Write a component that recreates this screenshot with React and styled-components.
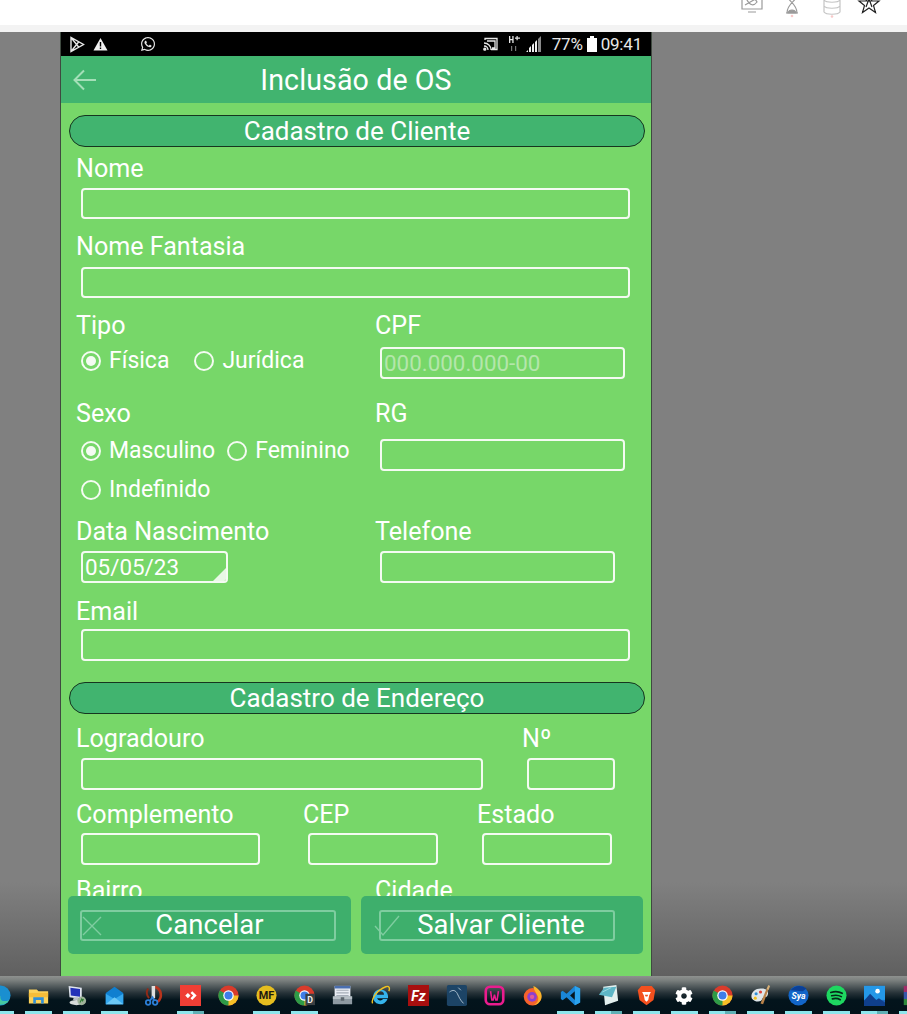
import React from "react";
import styled, { createGlobalStyle } from "styled-components";
import { FaCog, FaWhatsapp } from "react-icons/fa";

const GlobalStyle = createGlobalStyle`
  html, body {
    margin: 0;
    padding: 0;
    background: #ffffff;
  }
  * {
    box-sizing: border-box;
  }
`;

const Screen = styled.div`
  width: 907px;
  height: 1014px;
  overflow: hidden;
  display: flex;
  flex-direction: column;
  font-family: Roboto, "Liberation Sans", sans-serif;
  color: #ffffff;
`;

const BrowserBar = styled.div`
  height: 32px;
  flex: none;
  background: #ffffff;
  border-bottom: 7px solid #f3f3f3;
  display: flex;
  justify-content: flex-end;
  align-items: flex-start;
  gap: 16px;
  padding-right: 26px;
  overflow: hidden;
`;

const BrowserIcon = styled.svg`
  display: block;
  margin-top: -8px;
  margin-left: ${(props) => props.$left || 0}px;
  fill: none;
  stroke: ${(props) => props.$stroke || "#9a9a9a"};
  stroke-width: 1.2;
`;

const Desktop = styled.div`
  flex: 1;
  min-height: 0;
  background: linear-gradient(#808080 0, #808080 850px, #606060 944px);
  padding-left: 60px;
`;

const Phone = styled.div`
  position: relative;
  width: 592px;
  height: 100%;
  overflow: hidden;
  display: flex;
  flex-direction: column;
  background: #77d769;
  border-left: 1px solid #3f4a40;
  border-right: 1px solid #3f4a40;
`;

const StatusBar = styled.div`
  height: 24px;
  flex: none;
  margin: 0 -1px;
  background: #000000;
  display: flex;
  align-items: center;
  padding: 0 10px 0 9px;
  font-size: 17px;
  letter-spacing: -0.2px;
  color: #e8e8e8;
`;

const StatusLeft = styled.div`
  display: flex;
  align-items: center;
  gap: 8px;
  flex: 1;
`;

const WhatsappIcon = styled(FaWhatsapp)`
  width: 16px;
  height: 16px;
  margin-left: 24px;
`;

const StatusRight = styled.div`
  display: flex;
  align-items: center;
`;

const StatusIcon = styled.svg`
  display: block;
  margin-left: ${(props) => props.$left || 0}px;
  margin-right: ${(props) => props.$gap || 0}px;
`;

const AppBar = styled.div`
  height: 47px;
  flex: none;
  background: #41b46f;
  display: flex;
  align-items: center;
  justify-content: center;
  position: relative;
`;

const BackIcon = styled.svg`
  position: absolute;
  left: 12px;
  top: 13px;
  fill: none;
  stroke: #a4dfb8;
  stroke-width: 2;
`;

const Title = styled.div`
  font-size: 28.6px;
  font-weight: 400;
  letter-spacing: 0.1px;
`;

const Form = styled.div`
  padding: 12px 6px 0 8px;
  display: flex;
  flex-direction: column;
`;

const SectionPill = styled.div`
  height: 32px;
  margin-top: ${(props) => props.$top || 0}px;
  background: #41b46f;
  border: 1px solid #16351f;
  border-radius: 16px;
  display: flex;
  align-items: center;
  justify-content: center;
  font-size: 26px;
  line-height: 30px;
`;

const Row = styled.div`
  display: flex;
  margin-top: ${(props) => props.$top || 0}px;
  height: ${(props) => (props.$height ? `${props.$height}px` : "auto")};
`;

const Field = styled.div`
  width: ${(props) => (props.$width ? `${props.$width}px` : "auto")};
  flex: ${(props) => (props.$width ? "none" : "1")};
  padding-left: 7px;
`;

const Label = styled.div`
  font-size: 25.1px;
  line-height: 32px;
  height: 30px;
  white-space: nowrap;
`;

const TextBox = styled.div`
  position: relative;
  width: ${(props) => props.$width}px;
  height: ${(props) => props.$height || 32}px;
  margin: ${(props) => props.$top || 5}px 0 0 5px;
  border: 2px solid #f4fbf2;
  border-radius: 4px;
  font-size: 22.4px;
  line-height: 28px;
  padding-left: 2px;
  color: ${(props) => (props.$hint ? "#b4e6ab" : "#ffffff")};
  overflow: hidden;
`;

const DateCorner = styled.span`
  position: absolute;
  right: 0;
  bottom: 0;
  width: 0;
  height: 0;
  border-style: solid;
  border-width: 0 0 13px 13px;
  border-color: transparent transparent #e9f8e6 transparent;
`;

const RadioRow = styled.div`
  display: flex;
  align-items: center;
  margin: ${(props) => props.$top || 0}px 0 0 5px;
  height: 28px;
  gap: ${(props) => props.$gap || 0}px;
`;

const RadioItem = styled.div`
  display: flex;
  align-items: center;
  gap: 8px;
  font-size: 23px;
  line-height: 28px;
  white-space: nowrap;
`;

const RadioMark = styled.span`
  width: 20px;
  height: 20px;
  flex: none;
  border: 2px solid #f4fbf2;
  border-radius: 50%;
  display: flex;
  align-items: center;
  justify-content: center;
  &::after {
    content: "";
    width: 10px;
    height: 10px;
    border-radius: 50%;
    background: ${(props) => (props.$checked ? "#f4fbf2" : "transparent")};
  }
`;

const ActionBar = styled.div`
  position: absolute;
  left: 7px;
  top: 864px;
  display: flex;
  gap: 10px;
`;

const ActionPanel = styled.div`
  width: ${(props) => props.$width}px;
  height: 58px;
  background: #3eaf6c;
  border-radius: 5px;
  display: flex;
  align-items: center;
  padding-left: ${(props) => props.$left}px;
`;

const ActionButton = styled.div`
  position: relative;
  width: ${(props) => props.$width}px;
  height: 31px;
  border: 2px solid #7fcda0;
  border-radius: 3px;
  display: flex;
  align-items: center;
  justify-content: center;
  padding-left: ${(props) => props.$inset}px;
  font-size: 27.4px;
  line-height: 30px;
  letter-spacing: 0.1px;
`;

const ActionIcon = styled.svg`
  position: absolute;
  left: ${(props) => props.$left}px;
  top: 2px;
  fill: none;
  stroke: #7fcda0;
  stroke-width: 1.4;
`;

const Taskbar = styled.div`
  position: absolute;
  left: 0;
  right: 0;
  bottom: 0;
  height: 38px;
  background: linear-gradient(#8e918f 0, #7d8280 4px, #263238 17px, #03141c 24px, #03121a 100%);
  display: flex;
  overflow: hidden;
`;

const TaskSlot = styled.div`
  position: relative;
  width: 38px;
  flex: none;
  display: flex;
  justify-content: center;
  padding-top: 9px;
  margin-left: ${(props) => props.$shift || 0}px;
  &::after {
    content: "";
    display: ${(props) => (props.$running ? "block" : "none")};
    position: absolute;
    left: 6px;
    bottom: 0;
    width: 27px;
    height: 3px;
    background: ${(props) =>
      props.$stacked
        ? "linear-gradient(90deg, #8ee6ec 0 60%, #5fb0b5 60% 100%)"
        : "#8ee6ec"};
  }
`;

const TaskIcon = styled.svg`
  display: block;
  width: 21px;
  height: 21px;
`;

const GearIcon = styled(FaCog)`
  display: block;
  width: 18px;
  height: 18px;
  margin-top: 2px;
  color: #ffffff;
`;

const chromeParts = (
  <>
    <circle cx="12" cy="12" r="11.5" fill="#d93b2b" />
    <path d="M12 12 2 6.2A11.5 11.5 0 0 0 12 23.5l5.8-10z" fill="#2e9b47" />
    <path d="M12 12h11.5A11.5 11.5 0 0 1 12 23.5z" fill="#f6c026" />
    <circle cx="12" cy="12" r="6" fill="#ffffff" />
    <circle cx="12" cy="12" r="4.6" fill="#3f7de8" />
  </>
);

const svgText = { fontFamily: "Roboto, sans-serif", fontWeight: 700 };

const taskIcons = {
  edge: (
    <>
      <circle cx="12" cy="12" r="11.5" fill="#1a8fd0" />
      <path d="M2 16c3 8 15 9 20 1-6 3-11 1-10-4C7 9 3 11 2 16z" fill="#46c8a0" />
    </>
  ),
  folder: (
    <>
      <path d="M1 5h9l2 2h11v14H1z" fill="#fbd25c" />
      <path d="M1 9h22v5H1z" fill="#f5bd3a" />
      <path d="M6 14h12v7h-3v-4H9v4H6z" fill="#2f8fd8" />
    </>
  ),
  monitor: (
    <>
      <path d="M3 1 18 3v13L4 14z" fill="#dfe4ee" />
      <path d="M5 3 16 4.5v9L5.5 12z" fill="#2331b8" />
      <path d="M9 14h5v3H8z" fill="#b8bcc4" />
      <ellipse cx="12" cy="20" rx="8" ry="3" fill="#d7dad9" />
      <circle cx="18" cy="18" r="5" fill="#9fb29a" />
      <path d="m16 20 2-4 1 2 1-2" stroke="#2e7d32" strokeWidth="1.2" fill="none" />
    </>
  ),
  mail: (
    <>
      <path d="M2 9 12 2l10 7v13H2z" fill="#0f7fd0" />
      <path d="M2 10 12 16l10-6v12H2z" fill="#35a8ee" />
      <path d="M2 22 12 14l10 8z" fill="#6cc8f5" />
    </>
  ),
  snip: (
    <>
      <path d="M15 2a10 10 0 0 1 3 17" fill="none" stroke="#b8341c" strokeWidth="3" />
      <path d="M11 1h4v13l-2 3-2-3z" fill="#e0e0e0" />
      <path d="M7 4a9 9 0 0 0 1 11" fill="none" stroke="#8e2a18" strokeWidth="2.4" />
      <circle cx="7" cy="20" r="2.6" fill="none" stroke="#2c7fd8" strokeWidth="2" />
      <circle cx="15" cy="20" r="2.6" fill="none" stroke="#2c7fd8" strokeWidth="2" />
      <path d="m9 18 3-4 2 4" fill="none" stroke="#2c7fd8" strokeWidth="2" />
    </>
  ),
  anydesk: (
    <>
      <path d="M0 0h24v24H0z" fill="#ef3e35" />
      <path d="m9 9 3 3-3 3-3-3zM14 7l5 5-5 5-2-2 3-3-3-3z" fill="#ffffff" />
    </>
  ),
  chrome: chromeParts,
  mf: (
    <>
      <circle cx="12" cy="12" r="11.5" fill="#e5bd1f" />
      <text x="12" y="16.5" fontSize="12.5" textAnchor="middle" fill="#1d1a10" style={svgText}>MF</text>
    </>
  ),
  chromeDev: (
    <>
      {chromeParts}
      <path d="M13 10h11v13H13z" fill="#3a3f42" />
      <text x="18.5" y="20.5" fontSize="10" textAnchor="middle" fill="#f2f2f2" style={svgText}>D</text>
    </>
  ),
  toolbox: (
    <>
      <path d="M3 1h18v14H3z" fill="#e9edf3" />
      <path d="M3 1h18v3H3z" fill="#4a6fb0" />
      <path d="M5 6h14M5 9h14M5 12h14" stroke="#a5adb8" strokeWidth="1.2" />
      <path d="M1 13h22v9H1z" fill="#8e9aa2" />
      <path d="M1 13h22v3H1z" fill="#b7c0c6" />
      <path d="M10 14h4v4h-4z" fill="#5d676e" />
    </>
  ),
  ie: (
    <>
      <path d="M12 5a8.5 8.5 0 1 0 8 11h-5a4 4 0 0 1-7-1h12.6C21.4 9 17.5 5 12 5zM8 11a4 4 0 0 1 8 0z" fill="#35b4ec" />
      <path d="M3 21C1 17 7 6 18 2c4-1.500 5 1.500 3.500 5" fill="none" stroke="#f0c020" strokeWidth="1.6" />
    </>
  ),
  filezilla: (
    <>
      <path d="M0 0h24v24H0z" fill="#a70f0f" />
      <text x="12" y="18" fontSize="16" textAnchor="middle" fill="#ffffff" fontStyle="italic" style={svgText}>Fz</text>
    </>
  ),
  mysql: (
    <>
      <rect x="1" y="0" width="23" height="24" rx="2" fill="#1c4466" />
      <path d="M4 8c4-3 7-2 9 2s3 7 7 11M14 3l3 3" fill="none" stroke="#b8cad8" strokeWidth="1" />
    </>
  ),
  wamp: (
    <>
      <rect x="2" y="2" width="20" height="20" rx="5" fill="none" stroke="#ea1c8e" strokeWidth="3" />
      <path d="m7.500 7 1.500 10h1.500l1.500-6 1.500 6h1.500l1.500-10" fill="none" stroke="#ea1c8e" strokeWidth="1.800" />
    </>
  ),
  firefox: (
    <>
      <circle cx="12" cy="13.500" r="10" fill="#f6622c" />
      <path d="M13 1c7 3 11 9 9 15-2 5-6 7-9 7 6-3 7-8 4-12-1-3-4-6-4-10z" fill="#fbb32a" />
      <circle cx="11.500" cy="13.500" r="5.500" fill="#8d3fd0" />
      <circle cx="11.500" cy="13.500" r="2.500" fill="#e05a9a" />
    </>
  ),
  vscode: (
    <>
      <path d="M17 1 23 4v16l-6 3-9.500-9L3 17.300 1 16V8l2-1.300L7.500 10z" fill="#1a86d8" />
      <path d="m17 7-5.500 5 5.500 5z" fill="#06161e" />
      <path d="M17 1 23 4v16l-6 3z" fill="#2aa3ef" />
    </>
  ),
  notepad: (
    <>
      <path d="M6 2 21 0l2 18-15 5z" fill="#e3f0ef" />
      <path d="M1 11 7 3l14-1-5 12z" fill="#5eb6c6" />
      <path d="M5 8 15 3" stroke="#a8dbe4" strokeWidth="1" />
    </>
  ),
  brave: (
    <>
      <path d="M6 1h12l4 5-2 11-8 6-8-6L2 6z" fill="#f4501e" />
      <path d="M7 8h10l-2 4-1 5-2 2-2-2-1-5z" fill="#ffffff" />
      <path d="M10 11h4l-1 2h-2z" fill="#f4501e" />
    </>
  ),
  palette: (
    <>
      <path d="M2 15C0 9 6 3 14 4c5 0 8 4 6 8-1 3-5 1-6 4-1 4-9 4-12-1z" fill="#dfe6ea" />
      <circle cx="7" cy="10" r="1.800" fill="#2f8fd8" />
      <circle cx="12" cy="8" r="1.800" fill="#e0433a" />
      <circle cx="6" cy="15" r="1.800" fill="#f0c020" />
      <path d="m12 21 7-17 2 1-6 17z" fill="#b9824a" />
      <path d="m19 4 2-4 2 1-2 5z" fill="#d6b078" />
    </>
  ),
  sya: (
    <>
      <circle cx="12" cy="12" r="11.500" fill="#1265c8" />
      <path d="M3 6c3-5 12-7 18-2l-4 3z" fill="#0a3f96" />
      <text x="12" y="15.500" fontSize="10" textAnchor="middle" fill="#ffffff" fontStyle="italic" style={svgText}>Sya</text>
    </>
  ),
  spotify: (
    <>
      <circle cx="12" cy="12" r="11.500" fill="#1ed760" />
      <path d="M5.500 8.500c4.500-1.300 9.500-1 13 1M6.500 12.300c4-1 8-.7 11 1M7.300 15.800c3.300-.8 6.500-.5 9 1" fill="none" stroke="#05281a" strokeWidth="1.900" strokeLinecap="round" />
    </>
  ),
  photos: (
    <>
      <path d="M0 1h24v23H0z" fill="#1d68c0" />
      <path d="M0 1h24v16H0z" fill="#2498e8" />
      <circle cx="15.500" cy="7" r="2.600" fill="#ffffff" />
      <path d="m0 18 7-8 7 7 3-2 7 5v4H0z" fill="#0f3f8c" />
    </>
  ),
  rar: (
    <>
      <path d="M2 1h20v7H2z" fill="#a12d6a" />
      <path d="M2 8h20v8H2z" fill="#3656a8" />
      <path d="M2 16h20v7H2z" fill="#2f8a3c" />
      <path d="M10 1h4v22h-4z" fill="#d9b45a" />
    </>
  ),
};

const taskItems = [
  { id: "edge", running: true, shift: -19 },
  { id: "folder", running: true },
  { id: "monitor", running: true },
  { id: "mail", running: true },
  { id: "snip" },
  { id: "anydesk", running: true, stacked: true },
  { id: "chrome" },
  { id: "mf", running: true },
  { id: "chromeDev", running: true },
  { id: "toolbox" },
  { id: "ie" },
  { id: "filezilla" },
  { id: "mysql" },
  { id: "wamp" },
  { id: "firefox" },
  { id: "vscode", running: true },
  { id: "notepad", running: true, stacked: true },
  { id: "brave", running: true },
  { id: "gear", running: true },
  { id: "chrome", running: true, stacked: true },
  { id: "palette", running: true },
  { id: "sya", running: true },
  { id: "spotify", running: true },
  { id: "photos", running: true, stacked: true },
  { id: "rar", running: true },
];

const Radio = ({ checked, children }) => (
  <RadioItem>
    <RadioMark $checked={checked} />
    {children}
  </RadioItem>
);

export default function App() {
  return (
    <Screen>
      <GlobalStyle />
      <BrowserBar>
        <BrowserIcon width="24" height="26" viewBox="0 0 24 26">
          <path d="M2 2h20v15H2zM8 20h8M5 13 19 5M7 8c4-3 8-2 10 2-3 4-7 4-10-2z" />
        </BrowserIcon>
        <BrowserIcon width="24" height="26" viewBox="0 0 24 26">
          <path d="M6 3h12M6 21h12M7 3c0 6 10 8 10 18M17 3C17 9 7 11 7 21" />
          <path d="M8 21c1-4 7-4 8 0z" fill="#9a9a9a" />
          <circle cx="12" cy="24" r="1.300" fill="#f8c9c9" stroke="none" />
        </BrowserIcon>
        <BrowserIcon width="24" height="26" viewBox="0 0 24 26" $stroke="#c4c4c4">
          <path d="M4 2v18c2 3 14 3 16 0V2M4 8c2 3 14 3 16 0M4 14c2 3 14 3 16 0" />
          <circle cx="12" cy="24.500" r="1.300" fill="#f8c9c9" stroke="none" />
        </BrowserIcon>
        <BrowserIcon width="24" height="26" viewBox="0 0 24 26" $stroke="#222222" $left={-3}>
          <path d="m12 2 3 7h7l-5.500 4.500 2 7L12 16l-6.500 4.500 2-7L2 9h7zM8 9h8M9 15l3-8 3 8" />
        </BrowserIcon>
      </BrowserBar>
      <Desktop>
        <Phone>
          <StatusBar>
            <StatusLeft>
              <svg width="16" height="17" viewBox="0 0 16 17" fill="none" stroke="#e8e8e8" strokeWidth="1.400">
                <path d="M2 1.500v14L14.500 8.500zM2 1.500l8 10M2 15.500l8-10" />
              </svg>
              <svg width="15" height="14" viewBox="0 0 15 14">
                <path d="M7.500 1 14.500 13.500H.5z" fill="#f0f0f0" />
                <path d="M6.800 5h1.400v4.500H6.800zM6.800 10.500h1.400V12H6.800z" fill="#000000" />
              </svg>
              <WhatsappIcon />
            </StatusLeft>
            <StatusRight>
              <StatusIcon $gap={10} width="15" height="14" viewBox="0 0 15 14" fill="none" stroke="#e8e8e8" strokeWidth="1.300">
                <path d="M2 3V1.500h12v11H8M1 6c4 0 7 3 7 7M1 9c2.500 0 4 2 4 4M4 4h8v7H9" />
                <circle cx="1.800" cy="12.200" r="1" fill="#e8e8e8" />
              </StatusIcon>
              <StatusIcon $gap={6} width="12" height="18" viewBox="0 0 12 18" fill="#e8e8e8">
                <path d="M1 1h1.300v3h2V1h1.300v7H4.300V5.200h-2V8H1zM7 2.500h1.500V1h1.200v1.500H12v1.200H9.700V5.200H8.500V3.700H7z" />
                <path d="M3 11h1.200v5H3zM7 11h1.200v5H7z" fill="#777777" />
              </StatusIcon>
              <StatusIcon $gap={10} width="16" height="18" viewBox="0 0 16 18">
                <path d="M0 17l2-2v2zM3 17v-4l2-2v6zM6 17V10l2-2v9zM9 17V7l2-2v12z" fill="#f0f0f0" />
                <path d="M12 4l3-3v16h-3z" fill="#8a8a8a" />
              </StatusIcon>
              <span>77%</span>
              <StatusIcon $gap={4} $left={4} width="10" height="18" viewBox="0 0 10 18">
                <path d="M3 1h4v2h3v14H0V3h3z" fill="#ffffff" />
              </StatusIcon>
              <span>09:41</span>
            </StatusRight>
          </StatusBar>
          <AppBar>
            <BackIcon width="24" height="22" viewBox="0 0 24 22">
              <path d="M23 11H2M11 1.500 1.500 11l9.500 9.500" />
            </BackIcon>
            <Title>Inclusão de OS</Title>
          </AppBar>
          <Form>
            <SectionPill>Cadastro de Cliente</SectionPill>
            <Row $top={6}>
              <Field>
                <Label>Nome</Label>
                <TextBox $width={549} $height={31} />
              </Field>
            </Row>
            <Row $top={12}>
              <Field>
                <Label>Nome Fantasia</Label>
                <TextBox $width={549} $height={31} $top={6} />
              </Field>
            </Row>
            <Row $top={12} $height={88}>
              <Field $width={299}>
                <Label>Tipo</Label>
                <RadioRow $gap={25} $top={7}>
                  <Radio checked>Física</Radio>
                  <Radio>Jurídica</Radio>
                </RadioRow>
              </Field>
              <Field>
                <Label>CPF</Label>
                <TextBox $width={245} $top={7} $hint>000.000.000-00</TextBox>
              </Field>
            </Row>
            <Row $height={118}>
              <Field $width={299}>
                <Label>Sexo</Label>
                <RadioRow $gap={12} $top={9}>
                  <Radio checked>Masculino</Radio>
                  <Radio>Feminino</Radio>
                </RadioRow>
                <RadioRow $top={11}>
                  <Radio>Indefinido</Radio>
                </RadioRow>
              </Field>
              <Field>
                <Label>RG</Label>
                <TextBox $width={245} $top={11} />
              </Field>
            </Row>
            <Row>
              <Field $width={299}>
                <Label>Data Nascimento</Label>
                <TextBox $width={147}>
                  05/05/23
                  <DateCorner />
                </TextBox>
              </Field>
              <Field>
                <Label>Telefone</Label>
                <TextBox $width={235} />
              </Field>
            </Row>
            <Row $top={13}>
              <Field>
                <Label>Email</Label>
                <TextBox $width={549} $top={3} />
              </Field>
            </Row>
            <SectionPill $top={21}>Cadastro de Endereço</SectionPill>
            <Row $top={9}>
              <Field $width={446}>
                <Label>Logradouro</Label>
                <TextBox $width={402} />
              </Field>
              <Field>
                <Label>Nº</Label>
                <TextBox $width={88} />
              </Field>
            </Row>
            <Row $top={9}>
              <Field $width={227}>
                <Label>Complemento</Label>
                <TextBox $width={179} $top={4} />
              </Field>
              <Field $width={174}>
                <Label>CEP</Label>
                <TextBox $width={130} $top={4} />
              </Field>
              <Field>
                <Label>Estado</Label>
                <TextBox $width={130} $top={4} />
              </Field>
            </Row>
            <Row $top={10}>
              <Field $width={299}>
                <Label>Bairro</Label>
              </Field>
              <Field>
                <Label>Cidade</Label>
              </Field>
            </Row>
          </Form>
          <ActionBar>
            <ActionPanel $width={283} $left={12}>
              <ActionButton $width={256} $inset={3}>
                <ActionIcon $left={-1} width="22" height="24" viewBox="0 0 22 24">
                  <path d="M2 3l18 18M20 3 2 21" />
                </ActionIcon>
                Cancelar
              </ActionButton>
            </ActionPanel>
            <ActionPanel $width={282} $left={18}>
              <ActionButton $width={236} $inset={8}>
                <ActionIcon $left={-7} width="26" height="24" viewBox="0 0 26 24">
                  <path d="M1 12l8 9L25 2" />
                </ActionIcon>
                Salvar Cliente
              </ActionButton>
            </ActionPanel>
          </ActionBar>
        </Phone>
      </Desktop>
      <Taskbar>
        {taskItems.map((item, i) => (
          <TaskSlot key={i} $shift={item.shift} $running={item.running} $stacked={item.stacked}>
            {item.id === "gear" ? (
              <GearIcon />
            ) : (
              <TaskIcon viewBox="0 0 24 24">{taskIcons[item.id]}</TaskIcon>
            )}
          </TaskSlot>
        ))}
      </Taskbar>
    </Screen>
  );
}
